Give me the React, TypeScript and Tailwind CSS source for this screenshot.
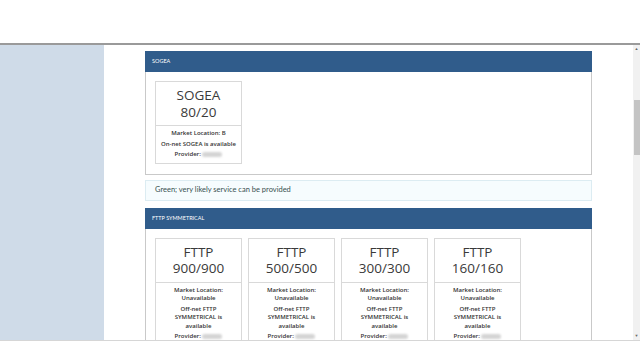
import type { ReactNode } from 'react';

type Plan = {
    name: string;
    speed: string;
    // each entry is a paragraph, split into the lines shown on the card
    lines: string[][];
};

const fttpLines = [['Market Location:', 'Unavailable'], ['Off-net FTTP', 'SYMMETRICAL is', 'available']];

const sogea: Plan[] = [
    { name: 'SOGEA', speed: '80/20', lines: [['Market Location: B'], ['On-net SOGEA is available']] },
];

const fttp: Plan[] = [
    { name: 'FTTP', speed: '900/900', lines: fttpLines },
    { name: 'FTTP', speed: '500/500', lines: fttpLines },
    { name: 'FTTP', speed: '300/300', lines: fttpLines },
    { name: 'FTTP', speed: '160/160', lines: fttpLines },
];

function PlanCard({ plan }: { plan: Plan }) {
    return (
        <div className="w-[87px] shrink-0 border border-[#d9d9d9] bg-white">
            <div className="h-[44px] flex flex-col items-center justify-center border-b border-[#d9d9d9] text-[13.5px] leading-[16.5px] text-[#3a3a3a] font-['Open_Sans',sans-serif]">
                <span>{plan.name}</span>
                <span>{plan.speed}</span>
            </div>
            <div className="px-[2px] pt-[3px] pb-[4px] text-center text-[6px] leading-[8.5px] font-semibold text-[#333] font-['Open_Sans',sans-serif] whitespace-nowrap">
                {plan.lines.map((para, i) => (
                    <p key={i} className="mb-[2px]">
                        {para.map((line, j) => (
                            <span key={j} className="block">{line}</span>
                        ))}
                    </p>
                ))}
                <p>
                    Provider:{' '}
                    <span className="inline-block align-middle w-[20px] h-[5px] rounded-sm bg-[#d4d4d4] blur-[1px]"></span>
                </p>
            </div>
        </div>
    );
}

function Panel({ title, children }: { title: string; children: ReactNode }) {
    return (
        <div className="w-[447px] border border-[#c9c9c9] bg-white">
            <div className="h-[21px] -mx-px -mt-px flex items-center bg-[#305c8b] pl-[7px] text-[5.5px] text-white font-['Lato',sans-serif]">
                {title}
            </div>
            <div className="flex gap-[6px] px-[9px] pt-[9px] pb-[10px]">{children}</div>
        </div>
    );
}

export default function App() {
    return (
        <div className="w-[640px] h-[360px] overflow-hidden bg-white flex flex-col">
            <div className="h-[45px] shrink-0 border-b-2 border-[#9a9a9a] bg-white"></div>
            <div className="h-[295px] shrink-0 flex overflow-hidden">
                <div className="w-[104px] shrink-0 bg-[#cfdbe8]"></div>
                <div className="flex-1 overflow-hidden pl-[41px] pt-[6px]">
                    <Panel title="SOGEA">
                        {sogea.map((p, i) => (
                            <PlanCard key={i} plan={p} />
                        ))}
                    </Panel>
                    <div className="mt-[5px] w-[447px] h-[21px] flex items-center border border-[#dcecf2] bg-[#f6fcfe] pl-[9px] text-[7.5px] text-[#37504f] font-['Lato',sans-serif]">
                        Green; very likely service can be provided
                    </div>
                    <div className="mt-[7px]">
                        <Panel title="FTTP SYMMETRICAL">
                            {fttp.map((p, i) => (
                                <PlanCard key={i} plan={p} />
                            ))}
                        </Panel>
                    </div>
                </div>
                <div className="w-[7px] shrink-0 bg-[#f1f1f1] flex flex-col items-center">
                    <div className="h-[8px] flex items-center text-[4px] text-[#666]">▲</div>
                    <div className="mt-[47px] w-[6px] h-[55px] bg-[#c4c4c4]"></div>
                    <div className="flex-1"></div>
                    <div className="h-[8px] flex items-center text-[4px] text-[#666]">▼</div>
                </div>
            </div>
            <div className="flex-1 border-t border-[#d6d6d6] bg-white"></div>
        </div>
    );
}
